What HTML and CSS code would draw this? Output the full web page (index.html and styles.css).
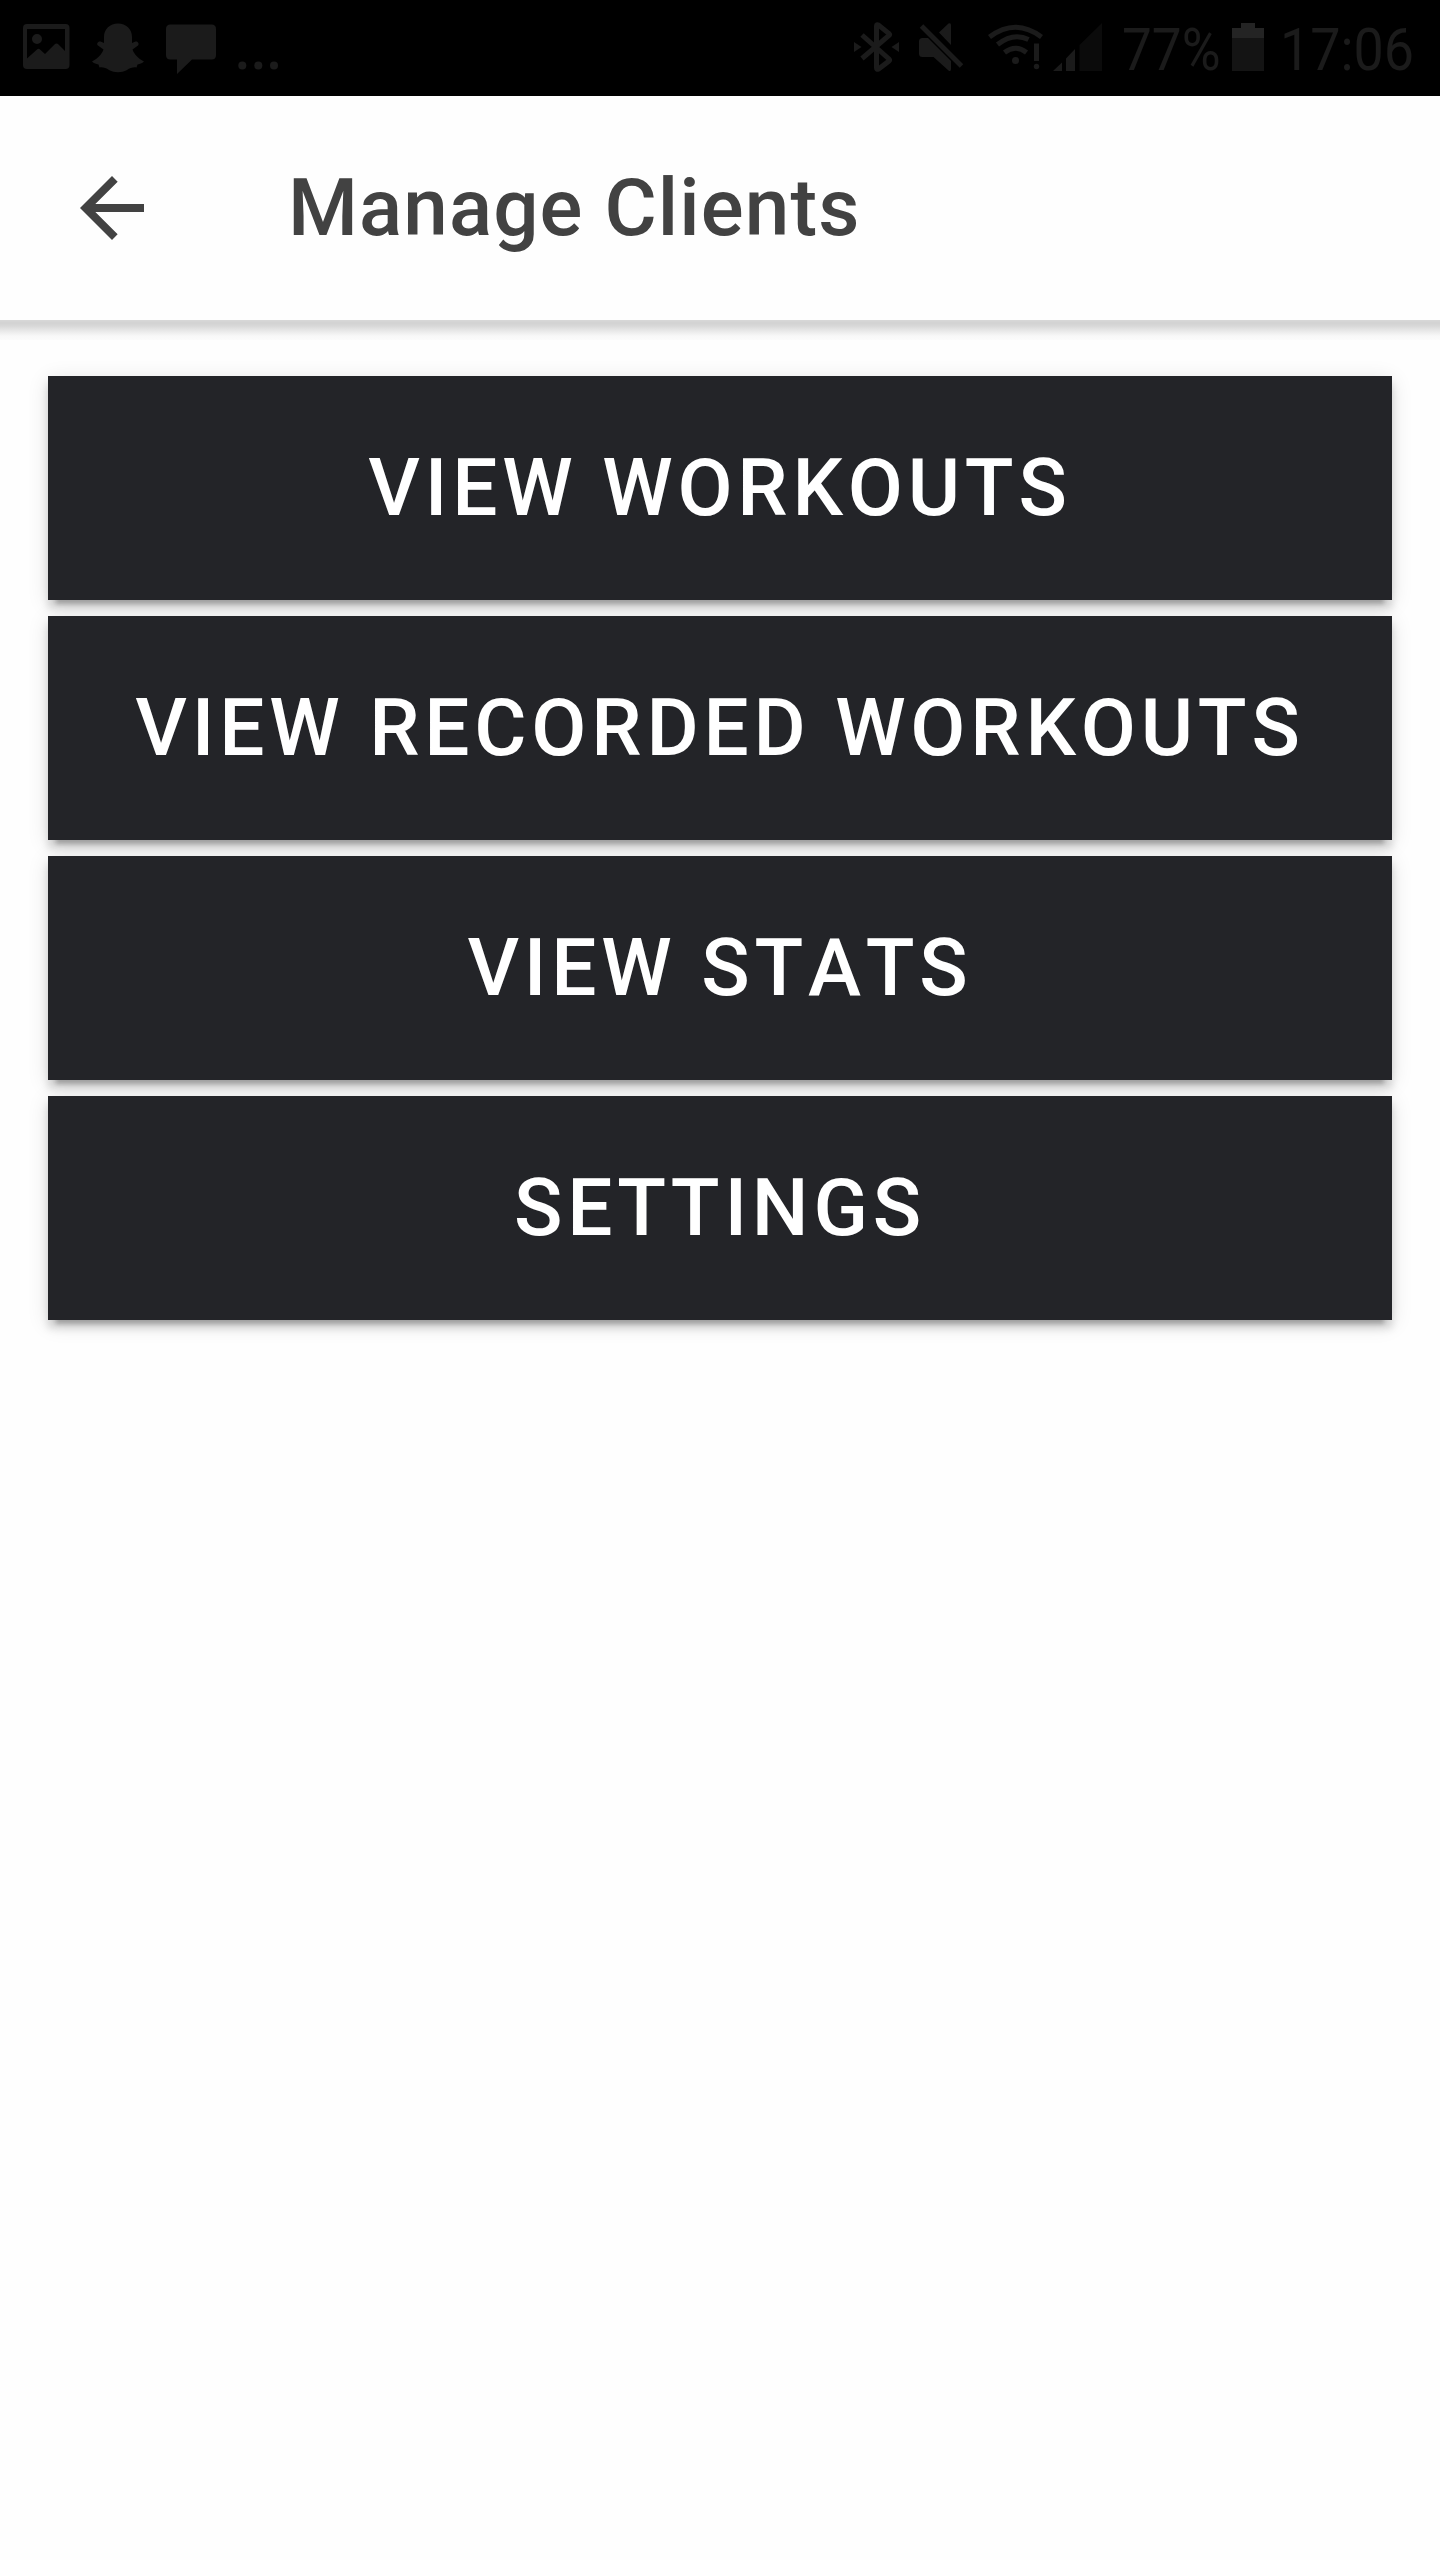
FILE: index.html
```
<!DOCTYPE html>
<html lang="en">
<head>
<meta charset="utf-8">
<title>Manage Clients</title>
<link rel="stylesheet" href="styles.css">
</head>
<body>
<div class="status-bar">
  <div class="notifications">
    <svg width="47" height="96" viewBox="23 0 47 96"><path fill-rule="evenodd" d="M27 24H65.500Q69.500 24 69.500 28V65Q69.500 69 65.500 69H27Q23 69 23 65V28Q23 24 27 24ZM27 29V58.500L37 49.500Q38.500 48 40 49.500L45 54L54.500 44.500Q56.500 42.500 58.500 44.500L65 51V29ZM37 34a5 5 0 1 1 0 10a5 5 0 0 1 0-10Z"/></svg>
    <svg width="52" height="96" viewBox="92 0 52 96"><path d="M118 23.500C126 23.500 132 29 132 37V43L135.500 41.500C138 41 139.500 44 138 45.500L132.500 49.500C134 54 138 58.500 144 61.500C142 63.500 140 64 137.500 64.500L136.500 67.500C133 67 130 68 127 70C121 73 115 73 109 70C106 68 103 67 99.500 67.500L98.500 64.500C96 64 94 63.500 92 61.500C98 58.500 102 54 103.500 49.500L98 45.500C96 44 98 41 100.500 41.500L104 43V37C104 29 110 23.500 118 23.500Z"/></svg>
    <svg width="50" height="96" viewBox="165 0 50 96"><path d="M169.500 24.500H210.500Q215 24.500 215 29V55Q215 59.500 210.500 59.500H191L176 74V59.500H169.500Q165 59.500 165 55V29Q165 24.500 169.500 24.500Z"/></svg>
    <svg width="40" height="96" viewBox="239 0 40 96"><circle cx="243.300" cy="65.500" r="4"/><circle cx="259.300" cy="65.500" r="4"/><circle cx="275" cy="65.500" r="4"/></svg>
  </div>
  <div class="system">
    <svg width="65" height="96" viewBox="854 0 65 96"><path class="line" d="M862 35L889 59Q890 60 889 61L878.500 69Q876.500 70 876.500 68V26Q876.500 24 878.500 25L889 33.500Q890 34.500 889 35.500L862 58.500"/><path d="M854 42L861.500 47L854 52ZM899 42V52L891.500 47Z"/></svg>
    <svg width="69" height="96" viewBox="919 0 69 96"><path d="M939 32.500L948.500 23.500Q951 22.500 951 25V45ZM922.500 38H928L951 61V69Q951 72 948.500 70.500L933.500 57H922.500Q919 57 919 53.500V41.500Q919 38 922.500 38Z"/><path class="gap" d="M922 22L964 64"/><path class="line" d="M921.500 26L961.500 66"/></svg>
    <svg width="65" height="96" viewBox="988 0 65 96"><path class="line" d="M989.500 37Q1015.500 17.500 1041.500 37M997.500 44.500Q1013.500 32 1028.500 39.500M1004.500 52.500Q1015.500 44 1026.500 52.500M1036.500 43.500V61"/><circle cx="1015.500" cy="60.500" r="3.500"/><circle cx="1036.500" cy="66.500" r="2.700"/></svg>
    <svg width="69" height="96" viewBox="1053 0 69 96"><path d="M1053 71L1062 62.500V71ZM1066 71V58.500L1075 49V71Z"/><path class="dim" d="M1079.500 71V45L1102 23V71Z"/></svg>
    <span class="percent">77%</span>
    <svg width="48" height="96" viewBox="1232 0 48 96"><path class="cap" d="M1232 28H1241V23H1255V28H1264V38H1232Z"/><path class="charge" d="M1232 38H1264V71H1232Z"/></svg>
    <span class="clock">17:06</span>
  </div>
</div>
<header class="toolbar">
  <svg class="back" width="64" height="64" viewBox="4 4 16 16" aria-label="Back"><path d="M20 11H7.830l5.590-5.590L12 4l-8 8 8 8 1.410-1.410L7.830 13H20v-2z"/></svg>
  <h1 class="title">Manage Clients</h1>
</header>
<main class="content">
  <button class="button">View Workouts</button>
  <button class="button">View Recorded Workouts</button>
  <button class="button">View Stats</button>
  <button class="button">Settings</button>
</main>
</body>
</html>
```
FILE: styles.css
```
* { box-sizing: border-box; }
body {
  margin: 0;
  min-height: 2560px;
  background: #fefefe;
  font-family: Roboto, sans-serif;
}
.status-bar {
  height: 96px;
  padding: 0 10px 0 23px;
  display: flex;
  justify-content: space-between;
  background: #000;
}
.status-bar svg { display: block; flex: none; fill: #1b1b1b; }
.notifications { display: flex; gap: 22px; }
.system { display: flex; }
.percent, .clock {
  flex: none;
  margin-top: 14px;
  height: 71px;
  font-size: 60px;
  line-height: 71px;
  color: #1b1b1b;
  white-space: nowrap;
  transform-origin: left center;
}
.percent { width: 111px; margin-right: -1px; transform: scaleX(.885); }
.clock { width: 150px; transform: scaleX(.897); }
.status-bar .line { fill: none; stroke: #1b1b1b; stroke-width: 5; }
.status-bar .gap { stroke: #000; stroke-width: 4; }
.status-bar .dim { fill: #0b0b0b; }
.status-bar .cap { fill: #242424; }
.status-bar .charge { fill: #141414; }
.toolbar {
  position: relative;
  height: 224px;
  padding: 0 80px;
  display: flex;
  align-items: center;
  gap: 144px;
  background: #fefefe;
}
.toolbar::after {
  content: "";
  position: absolute;
  top: 100%;
  left: 0;
  width: 100%;
  height: 20px;
  background: linear-gradient(#d8d8d8, #d2d2d2 15%, #d8d8d8 30%, #ececec 60%, #f8f8f8 80%, #fbfbfb);
}
.back { fill: #424242; }
.title {
  margin: 0;
  font-size: 80px;
  font-weight: 500;
  line-height: 96px;
  letter-spacing: 1.1px;
  color: #424242;
}
.content {
  padding: 56px 48px;
  display: flex;
  flex-direction: column;
  gap: 16px;
}
.button {
  height: 224px;
  padding: 0;
  border: 0;
  background: #232428;
  color: #fff;
  font: 500 80px Roboto, sans-serif;
  font-kerning: none;
  letter-spacing: 4.8px;
  text-transform: uppercase;
  white-space: nowrap;
  box-shadow: 0 12px 4px -8px rgba(0, 0, 0, .2), 0 8px 8px rgba(0, 0, 0, .14), 0 4px 20px rgba(0, 0, 0, .12);
}
```
